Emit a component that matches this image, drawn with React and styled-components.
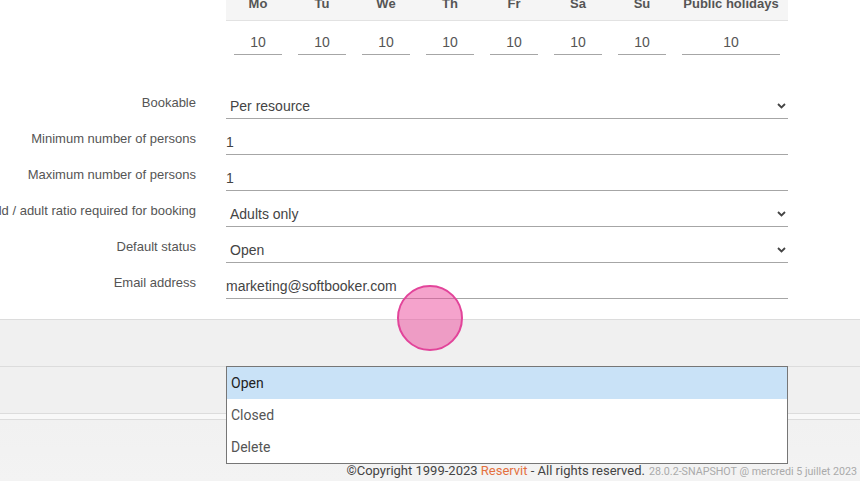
import React from 'react';
import styled, { createGlobalStyle } from 'styled-components';

const GlobalStyle = createGlobalStyle`
  html, body {
    margin: 0;
    padding: 0;
    background: #f0f0f0;
  }
  body {
    font-family: "Liberation Sans", Arial, sans-serif;
  }
`;

const Page = styled.div`
  position: relative;
  width: 860px;
  height: 481px;
  overflow: hidden;
  display: flex;
  flex-direction: column;
`;

const Content = styled.section`
  background: #fff;
  margin-top: -12px;
  padding-bottom: 20px;
`;

const Table = styled.div`
  margin-left: 226px;
  width: 562px;
`;

const TableRow = styled.div`
  display: grid;
  grid-template-columns: repeat(7, 64px) 114px;
`;

const HeadRow = styled(TableRow)`
  background: #f5f5f5;
  border-bottom: 1px solid #e2e2e2;
  height: 32px;
  align-items: center;
`;

const HeadCell = styled.div`
  text-align: center;
  font-size: 13px;
  line-height: 16px;
  font-weight: bold;
  color: #555;
  white-space: nowrap;
`;

const InputCell = styled.div`
  padding: 10px 8px;
`;

const NumberBox = styled.div`
  height: 22px;
  padding-bottom: 1px;
  border-bottom: 1px solid #a6a6a6;
  display: flex;
  align-items: center;
  justify-content: center;
  font-size: 14px;
  color: #555;
`;

const Form = styled.div`
  margin-top: 18px;
`;

const FormRow = styled.div`
  display: grid;
  grid-template-columns: 196px 562px;
  column-gap: 30px;
  height: 36px;
  align-items: end;
`;

const Label = styled.div`
  display: flex;
  justify-content: flex-end;
  white-space: nowrap;
  font-size: 13px;
  line-height: 17px;
  color: #555;
  margin-bottom: 8px;
`;

const Field = styled.div`
  height: 24px;
  border-bottom: 1px solid #a6a6a6;
  display: flex;
  align-items: center;
  justify-content: space-between;
  padding-left: ${(p) => (p.$select ? '4px' : '0')};
  padding-right: 2px;
  font-size: 14px;
  color: #444;
`;

const Chevron = styled.svg`
  width: 9px;
  height: 6px;
  flex: none;
`;

const Bar = styled.div`
  border-top: 1px solid #dcdcdc;
  background: #f0f0f0;
  height: 46px;
`;

const Band = styled.div`
  border-top: 1px solid #dcdcdc;
  border-bottom: 1px solid #dcdcdc;
  background: #f8f8f8;
  height: 5px;
`;

const Footer = styled.footer`
  flex: 1;
  background: linear-gradient(#f1f1f1, #f3f3f3);
  display: flex;
  align-items: flex-end;
  justify-content: flex-end;
  padding: 0 3px 3px;
`;

const FooterLine = styled.div`
  display: flex;
  align-items: baseline;
  gap: 4px;
  font-family: Roboto, "Liberation Sans", sans-serif;
  white-space: nowrap;
`;

const Copy = styled.span`
  font-size: 13px;
  color: #444;
`;

const Brand = styled.span`
  color: #e4713f;
`;

const Version = styled.span`
  font-size: 10.7px;
  color: #aaa;
`;

const Dropdown = styled.ul`
  position: absolute;
  left: 226px;
  top: 366px;
  width: 562px;
  margin: 0;
  padding: 0;
  list-style: none;
  background: #fff;
  border: 1px solid #767676;
  box-sizing: border-box;
  font-family: Roboto, "Liberation Sans", sans-serif;
  font-size: 14px;
`;

const Option = styled.li`
  height: 32px;
  line-height: 32px;
  padding-left: 4px;
  background: ${(p) => (p.$active ? '#c9e2f7' : '#fff')};
  color: ${(p) => (p.$active ? '#222' : '#555')};
`;

const Touch = styled.div`
  position: absolute;
  left: 397px;
  top: 285px;
  width: 66px;
  height: 66px;
  box-sizing: border-box;
  border-radius: 50%;
  background: rgba(236, 72, 153, 0.5);
  border: 2px solid #e2449a;
`;

const days = ['Mo', 'Tu', 'We', 'Th', 'Fr', 'Sa', 'Su', 'Public holidays'];

const rows = [
  { label: 'Bookable', value: 'Per resource', select: true },
  { label: 'Minimum number of persons', value: '1' },
  { label: 'Maximum number of persons', value: '1' },
  { label: 'Child / adult ratio required for booking', value: 'Adults only', select: true },
  { label: 'Default status', value: 'Open', select: true },
  { label: 'Email address', value: 'marketing@softbooker.com' },
];

const ChevronIcon = () => (
  <Chevron viewBox="0 0 9 6">
    <path d="M1 1 L4.5 4.5 L8 1" fill="none" stroke="#444" strokeWidth="1.8" />
  </Chevron>
);

const App = () => {
  return (
    <>
      <GlobalStyle />
      <Page>
        <Content>
          <Table>
            <HeadRow>
              {days.map((d) => (
                <HeadCell key={d}>{d}</HeadCell>
              ))}
            </HeadRow>
            <TableRow>
              {days.map((d) => (
                <InputCell key={d}>
                  <NumberBox>10</NumberBox>
                </InputCell>
              ))}
            </TableRow>
          </Table>
          <Form>
            {rows.map((r) => (
              <FormRow key={r.label}>
                <Label>{r.label}</Label>
                <Field $select={r.select}>
                  <span>{r.value}</span>
                  {r.select && <ChevronIcon />}
                </Field>
              </FormRow>
            ))}
          </Form>
        </Content>
        <Bar />
        <Bar />
        <Band />
        <Footer>
          <FooterLine>
            <Copy>
              ©Copyright 1999-2023 <Brand>Reservit</Brand> - All rights reserved.
            </Copy>
            <Version>28.0.2-SNAPSHOT @ mercredi 5 juillet 2023</Version>
          </FooterLine>
        </Footer>
        <Dropdown>
          <Option $active>Open</Option>
          <Option>Closed</Option>
          <Option>Delete</Option>
        </Dropdown>
        <Touch />
      </Page>
    </>
  );
};

export default App;
